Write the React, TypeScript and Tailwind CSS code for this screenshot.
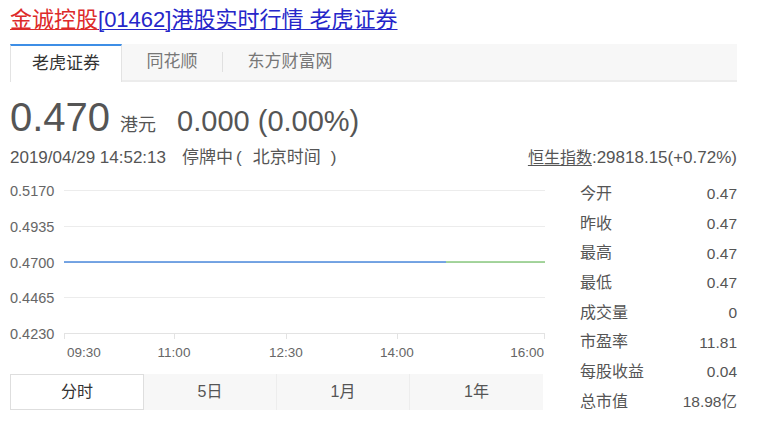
import React from "react";

const FONT = { fontFamily: '"Liberation Sans", Arial, "Noto Sans CJK SC", sans-serif' };

function Chart() {
  const grid = [15.5, 51.5, 87.5, 122.5, 158.5];
  const labels = ["0.5170", "0.4935", "0.4700", "0.4465", "0.4230"];
  const ticks = [64.5, 174.5, 286.5, 397.5, 544.5];
  return (
    <svg width="550" height="195" className="block" style={FONT}>
      {grid.slice(0, 4).map((y, i) => (
        <line key={i} x1="64" x2="545" y1={y} y2={y} stroke="#ececec" strokeWidth="1" />
      ))}
      <line x1="64" x2="545" y1="158.5" y2="158.5" stroke="#e3e3e3" strokeWidth="1" />
      {ticks.map((x, i) => (
        <line key={i} x1={x} x2={x} y1="158" y2="164" stroke="#e3e3e3" strokeWidth="1" />
      ))}
      {labels.map((t, i) => (
        <text key={t} x="10" y={grid[i] + 5} fontSize="14.5" fill="#666">
          {t}
        </text>
      ))}
      <line x1="64" x2="446" y1="87" y2="87" stroke="#4a89dc" strokeWidth="1.5" />
      <line x1="446" x2="545" y1="87" y2="87" stroke="#88c97e" strokeWidth="1.5" />
      <text x="67" y="182" fontSize="13.5" fill="#666">09:30</text>
      <text x="174" y="182" fontSize="13.5" fill="#666" textAnchor="middle">11:00</text>
      <text x="286" y="182" fontSize="13.5" fill="#666" textAnchor="middle">12:30</text>
      <text x="397" y="182" fontSize="13.5" fill="#666" textAnchor="middle">14:00</text>
      <text x="544" y="182" fontSize="13.5" fill="#666" textAnchor="end">16:00</text>
    </svg>
  );
}

const stats: [string, string][] = [
  ["今开", "0.47"],
  ["昨收", "0.47"],
  ["最高", "0.47"],
  ["最低", "0.47"],
  ["成交量", "0"],
  ["市盈率", "11.81"],
  ["每股收益", "0.04"],
  ["总市值", "18.98亿"],
];

export default function App() {
  return (
    <div className="w-[759px] h-[425px] overflow-hidden bg-white text-[#444]" style={FONT}>
      <div className="h-[44px] pl-[10px] pt-[6px] text-[22px] leading-[28px]">
        <a className="text-[#dd2a2a] underline decoration-1 underline-offset-2" href="#">金诚控股</a>
        <a className="text-[#2626c9] underline decoration-1 underline-offset-2" href="#">[01462]港股实时行情 老虎证券</a>
      </div>

      <div className="ml-[10px] w-[727px] h-[38px] flex bg-[#f7f7f7] border-b-2 border-[#ececec] text-[17px]">
        <div className="w-[112px] h-[38px] bg-white border-t-2 border-[#3d8ee6] border-l border-l-[#e3e3e3] border-r border-r-[#e3e3e3] flex items-center justify-center text-[#333]">
          老虎证券
        </div>
        <div className="w-[100px] flex items-center justify-center text-[#777]">同花顺</div>
        <div className="w-px h-[20px] self-center bg-[#e0e0e0]" />
        <div className="w-[134px] flex items-center justify-center text-[#777]">东方财富网</div>
      </div>

      <div className="h-[65px] pl-[10px] pt-[13px] flex items-baseline text-[#555]">
        <span className="text-[40px] leading-[44px]">0.470</span>
        <span className="ml-[10px] text-[18px]">港元</span>
        <span className="ml-[21px] text-[29px]">0.000 (0.00%)</span>
      </div>

      <div className="h-[22px] pl-[10px] pr-[22px] flex items-baseline text-[#555] leading-[22px] text-[17px]">
        <span>2019/04/29 14:52:13</span>
        <span className="ml-[16px]">停牌中</span>
        <span className="ml-[3px]">(</span>
        <span className="ml-[11px]">北京时间</span>
        <span className="ml-[10px]">)</span>
        <span className="ml-auto text-[16px] underline decoration-1 underline-offset-2">恒生指数</span>
        <span>:29818.15(+0.72%)</span>
      </div>

      <div className="flex mt-[6px]">
        <div className="w-[550px]">
          <Chart />
          <div className="ml-[10px] mt-[4px] w-[533px] h-[36px] flex bg-[#f7f7f7] text-[16px] text-[#555]">
            <div className="w-[134px] bg-white border border-[#dedede] flex items-center justify-center text-[#333]">分时</div>
            <div className="w-[133px] flex items-center justify-center border-r border-[#ededed]">5日</div>
            <div className="w-[133px] flex items-center justify-center border-r border-[#ededed]">1月</div>
            <div className="flex-1 flex items-center justify-center">1年</div>
          </div>
        </div>
        <div className="ml-[30px] w-[157px] pt-[4px]">
          {stats.map(([k, v]) => (
            <div key={k} className="h-[29.7px] flex items-center justify-between text-[#555]">
              <span className="text-[16px]">{k}</span>
              <span className="text-[15.5px]">{v}</span>
            </div>
          ))}
        </div>
      </div>
    </div>
  );
}
